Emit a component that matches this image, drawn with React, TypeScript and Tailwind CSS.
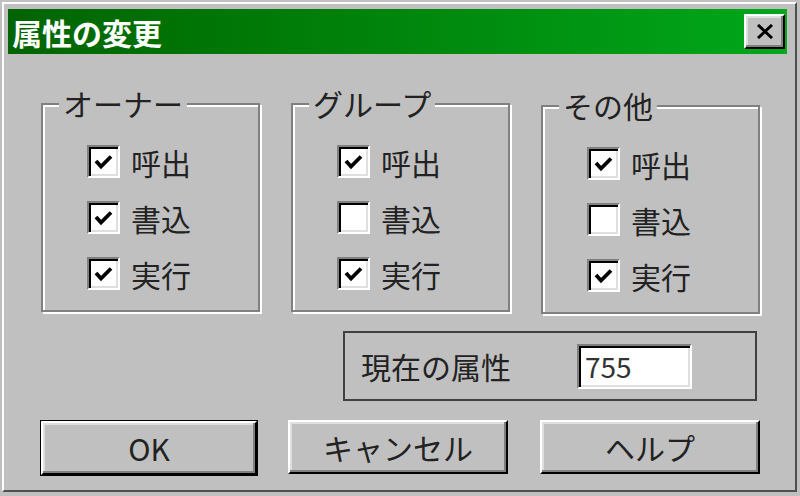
import type { ReactNode } from "react";

type Check = { label: string; checked: boolean };

const groups: { title: string; checks: Check[]; className: string }[] = [
  {
    title: "オーナー",
    className: "",
    checks: [
      { label: "呼出", checked: true },
      { label: "書込", checked: true },
      { label: "実行", checked: true },
    ],
  },
  {
    title: "グループ",
    className: "ml-[31px]",
    checks: [
      { label: "呼出", checked: true },
      { label: "書込", checked: false },
      { label: "実行", checked: true },
    ],
  },
  {
    title: "その他",
    className: "ml-[31px] mt-[2px]",
    checks: [
      { label: "呼出", checked: true },
      { label: "書込", checked: false },
      { label: "実行", checked: true },
    ],
  },
];

function CheckBox({ checked }: { checked: boolean }) {
  return (
    <span className="flex h-[33px] w-[33px] shrink-0 items-center justify-center border-2 border-t-[#808080] border-l-[#808080] border-r-white border-b-white bg-white shadow-[inset_2px_2px_0_#000,inset_-2px_-2px_0_#dfdfdf]">
      {checked && (
        <svg width="19" height="16" viewBox="0 0 19 16" className="mt-[1px]">
          <path
            d="M2 7 L7 12.5 L17 2.5"
            stroke="#000"
            strokeWidth="3.8"
            fill="none"
          />
        </svg>
      )}
    </span>
  );
}

function Group({
  title,
  checks,
  className,
}: {
  title: string;
  checks: Check[];
  className: string;
}) {
  return (
    <div
      className={`h-[209px] w-[219px] border-2 border-[#808080] shadow-[inset_2px_2px_0_#fff,2px_2px_0_#fff] ${className}`}
    >
      <div className="-mt-[17px] ml-[16px] w-fit bg-[#c0c0c0] px-[4px] text-[30px] leading-[30px]">
        {title}
      </div>
      <div className="mt-[27px] flex flex-col gap-[23px] pl-[44px]">
        {checks.map((c) => (
          <div key={c.label} className="flex h-[33px] items-center gap-[11px]">
            <CheckBox checked={c.checked} />
            <span className="text-[30px] leading-[30px]">{c.label}</span>
          </div>
        ))}
      </div>
    </div>
  );
}

function Button({
  children,
  className,
}: {
  children: ReactNode;
  className: string;
}) {
  return (
    <div
      className={`flex h-[54px] items-center justify-center border-2 border-t-white border-l-white border-r-black border-b-black shadow-[inset_-2px_-2px_0_#808080,inset_2px_2px_0_#dfdfdf] text-[30px] leading-[30px] ${className}`}
    >
      {children}
    </div>
  );
}

export default function App() {
  return (
    <div className="h-[496px] w-[800px] overflow-hidden bg-[#c0c0c0] pl-[2px] pt-[2px] font-['Noto_Sans_CJK_JP',sans-serif] text-[#222]">
      <div className="h-[490px] w-[795px] border-2 border-t-white border-l-white border-r-[#505050] border-b-[#505050] pl-[4px] pt-[5px]">
        {/* title bar */}
        <div className="flex h-[45px] w-[779px] items-center justify-between bg-linear-to-r from-[#006400] to-[#00a81a] pl-[4px] pr-[2px]">
          <span className="text-[30px] font-bold leading-[30px] text-white">
            属性の変更
          </span>
          <div className="flex h-[35px] w-[41px] items-center justify-center border-2 border-t-white border-l-white border-r-black border-b-black bg-[#c0c0c0] shadow-[inset_-2px_-2px_0_#808080,inset_2px_2px_0_#dfdfdf]">
            <svg width="18" height="15" viewBox="0 0 18 15">
              <path d="M2 1 L16 14 M16 1 L2 14" stroke="#000" strokeWidth="3" />
            </svg>
          </div>
        </div>

        <div className="pl-[33px] pt-[49px]">
          <div className="flex items-start">
            {groups.map((g) => (
              <Group
                key={g.title}
                title={g.title}
                checks={g.checks}
                className={g.className}
              />
            ))}
          </div>

          <div className="ml-[302px] mt-[17px] flex h-[70px] w-[414px] items-center border-2 border-[#404040] pl-[16px]">
            <span className="w-[216px] text-[30px] leading-[30px]">
              現在の属性
            </span>
            <div className="flex h-[45px] w-[115px] items-center border-2 border-t-[#808080] border-l-[#808080] border-r-white border-b-white bg-white pl-[6px] shadow-[inset_2px_2px_0_#000,inset_-2px_-2px_0_#dfdfdf] text-[28px] leading-[28px] text-[#333]">
              755
            </div>
          </div>

          <div className="-ml-[1px] mt-[19px] flex">
            <div className="w-[218px] border border-black">
              <Button className="w-full h-[52px]">OK</Button>
            </div>
            <Button className="ml-[30px] w-[220px]">キャンセル</Button>
            <Button className="ml-[32px] w-[220px]">ヘルプ</Button>
          </div>
        </div>
      </div>
    </div>
  );
}
